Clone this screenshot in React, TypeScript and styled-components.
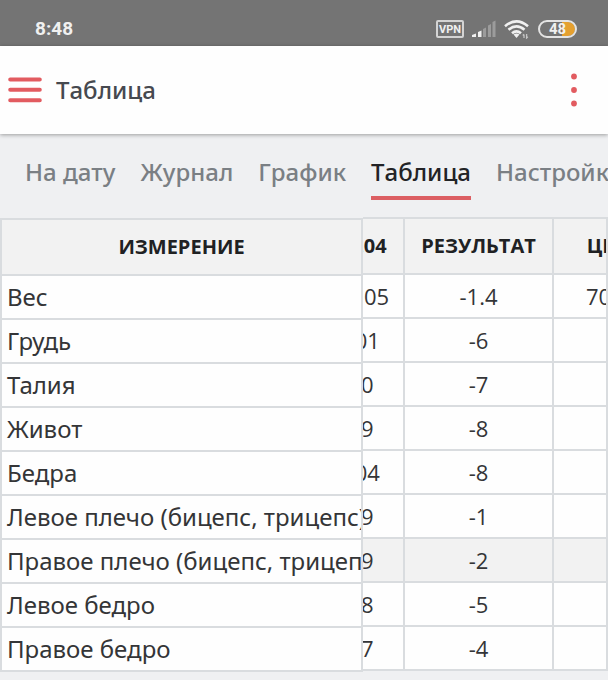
import React from 'react';
import styled, { createGlobalStyle, css } from 'styled-components';

const line = '#d9dcdf';
const red = '#e25b60';

const GlobalStyle = createGlobalStyle`
  *, *::before, *::after { box-sizing: border-box; }
  body {
    margin: 0;
    min-height: 100vh;
    overflow-x: hidden;
    background: #eff0f2;
    color: #343537;
    font-family: "Noto Sans", "Open Sans", sans-serif;
  }
  button { margin: 0; padding: 0; border: 0; background: none; font: inherit; cursor: pointer; }
`;

const StatusBar = styled.div`
  display: flex;
  align-items: center;
  justify-content: space-between;
  height: 46px;
  padding: 12px 31px 0 35px;
  background: #747474;
  color: #f0f0f0;
  font-family: Roboto, sans-serif;
`;

const Clock = styled.time`
  font-size: 19px;
  line-height: 24px;
  font-weight: 700;
`;

const StatusIcons = styled.div`
  display: flex;
  align-items: center;
  gap: 8px;
`;

const VpnBadge = styled.span`
  display: flex;
  align-items: center;
  justify-content: center;
  width: 28px;
  height: 18px;
  border: 2px solid #d4d4d4;
  border-radius: 2px;
  font-size: 11px;
  font-weight: 700;
`;

const Battery = styled.span`
  display: flex;
  align-items: center;
  justify-content: center;
  width: 39px;
  height: 18px;
  margin-left: 1px;
  border: 2px solid #e4e4e4;
  border-radius: 9px;
  background: linear-gradient(to right, #747474 0 62%, #e5a02f 62%);
  background-clip: padding-box;
  font-size: 15px;
  line-height: 14px;
  font-weight: 700;
`;

const AppBar = styled.header`
  display: flex;
  align-items: center;
  gap: 14px;
  height: 88px;
  padding: 0 22px 0 8px;
  background: #fefefe;
  box-shadow: 0 1px 4px rgba(0, 0, 0, 0.35);
`;

const Title = styled.h1`
  flex: 1;
  margin: 0;
  color: #46494f;
  font-size: 24px;
  line-height: 32px;
  font-weight: 500;
  font-kerning: none;
`;

const IconButton = styled.button`
  display: flex;
  align-items: center;
  justify-content: center;
  color: ${red};
`;

const Tabs = styled.nav`
  display: flex;
  gap: 25px;
  height: 83px;
  padding: 20px 0 0 25px;
  overflow: hidden;
`;

const Tab = styled.a<{ $active?: boolean }>`
  flex: none;
  height: 46px;
  border-bottom: 4px solid ${({ $active }) => ($active ? '#dc5f63' : 'transparent')};
  color: ${({ $active }) => ($active ? '#222326' : '#7a7f84')};
  font-size: 24px;
  line-height: 36px;
  font-weight: 500;
  font-kerning: none;
  text-decoration: none;
  white-space: nowrap;
`;

const Sheet = styled.main`
  display: flex;
  align-items: flex-start;
`;

const Pinned = styled.div`
  flex: 0 0 363px;
  min-width: 0;
  margin-top: 1px;
`;

const Scroller = styled.div`
  flex: 1;
  min-width: 0;
  overflow: hidden;
  border-right: 2px solid ${line};
`;

const tableBase = css`
  border-collapse: separate;
  border-spacing: 0;
  table-layout: fixed;
  border-top: 2px solid ${line};
`;

const NameTable = styled.table`
  ${tableBase}
  width: 100%;
  border-left: 2px solid ${line};
`;

const ValueTable = styled.table`
  ${tableBase}
  width: 357px;
  margin-left: -44px;
`;

const HeadCell = styled.th`
  height: 56px;
  padding: 0 6px;
  border-right: 2px solid ${line};
  border-bottom: 2px solid ${line};
  background: #f2f2f2;
  color: #202123;
  font-family: "Open Sans", "Noto Sans", sans-serif;
  font-size: 20px;
  line-height: 28px;
  font-weight: 700;
  font-kerning: none;
  text-align: center;
  text-transform: uppercase;
  white-space: nowrap;
`;

const cell = css`
  height: 44px;
  border-right: 2px solid ${line};
  border-bottom: 2px solid ${line};
  font-weight: 400;
  white-space: nowrap;
  overflow: hidden;
`;

const NameCell = styled.th`
  ${cell}
  padding: 0 0 0 5px;
  background: #fefefe;
  font-size: 24px;
  line-height: 32px;
  text-align: left;
`;

const ValueCell = styled.td<{ $shaded?: boolean }>`
  ${cell}
  padding: 0;
  background: ${({ $shaded }) => ($shaded ? '#f2f2f2' : '#fefefe')};
  font-family: "Open Sans", "Noto Sans", sans-serif;
  font-size: 22px;
  line-height: 32px;
  text-align: center;
`;

const tabs = ['На дату', 'Журнал', 'График', 'Таблица', 'Настройки'];

const rows = [
  { name: 'Вес', value: '71.05', result: '-1.4', goal: '70.00' },
  { name: 'Грудь', value: '101', result: '-6', goal: '' },
  { name: 'Талия', value: '80', result: '-7', goal: '' },
  { name: 'Живот', value: '89', result: '-8', goal: '' },
  { name: 'Бедра', value: '104', result: '-8', goal: '' },
  { name: 'Левое плечо (бицепс, трицепс)', value: '29', result: '-1', goal: '' },
  { name: 'Правое плечо (бицепс, трицепс)', value: '29', result: '-2', goal: '', shaded: true },
  { name: 'Левое бедро', value: '58', result: '-5', goal: '' },
  { name: 'Правое бедро', value: '57', result: '-4', goal: '' },
];

const SignalIcon = () => (
  <svg width="24" height="18" viewBox="0 0 24 18" aria-hidden="true">
    <path d="M0 15l4-1.500V17H0zM6 12l3.500-1.500V17H6z" fill="#f0f0f0" />
    <path d="M11 9l3-1.500V17h-3zM16 5.500l3-1.500v13h-3zM20.500 2l3-1.500V17h-3z" fill="#9c9c9c" />
  </svg>
);

const WifiIcon = () => (
  <svg width="25" height="20" viewBox="0 0 25 20" aria-hidden="true">
    <g fill="none" stroke="#f0f0f0" strokeWidth="2.6">
      <path d="M1 7.200Q12.500-2.600 24 7.200" />
      <path d="M4.500 10.800Q12.500 4 20.500 10.800" />
      <path d="M8 14.200Q12.500 10.400 17 14.200" />
    </g>
    <path d="M9.500 15.600Q12.500 13.400 15.500 15.600L12.500 19z" fill="#f0f0f0" />
    <path d="M20 19v-3.500M18.800 16.500l1.200-1.200M22.600 15v4l1.200-1.200" fill="none" stroke="#c4c4c4" strokeWidth="1.300" />
  </svg>
);

const MenuIcon = () => (
  <svg width="34" height="26" viewBox="0 0 34 26" aria-hidden="true">
    <path d="M2.200 2.500h29.600M2.200 12.800h29.600M2.200 23.200h29.600" stroke="currentColor" strokeWidth="4" strokeLinecap="round" />
  </svg>
);

const MoreIcon = () => (
  <svg width="24" height="36" viewBox="0 0 24 36" fill="currentColor" aria-hidden="true">
    <circle cx="12" cy="4.500" r="2.900" />
    <circle cx="12" cy="18" r="2.900" />
    <circle cx="12" cy="31.500" r="2.900" />
  </svg>
);

export default function App() {
  return (
    <>
      <GlobalStyle />
      <StatusBar>
        <Clock>8:48</Clock>
        <StatusIcons>
          <VpnBadge>VPN</VpnBadge>
          <SignalIcon />
          <WifiIcon />
          <Battery>48</Battery>
        </StatusIcons>
      </StatusBar>
      <AppBar>
        <IconButton type="button" aria-label="Меню"><MenuIcon /></IconButton>
        <Title>Таблица</Title>
        <IconButton type="button" aria-label="Ещё"><MoreIcon /></IconButton>
      </AppBar>
      <Tabs>
        {tabs.map((tab) => (
          <Tab key={tab} href="#" $active={tab === 'Таблица'} aria-current={tab === 'Таблица' ? 'page' : undefined}>
            {tab}
          </Tab>
        ))}
      </Tabs>
      <Sheet>
        <Pinned>
          <NameTable>
            <thead>
              <tr><HeadCell scope="col">Измерение</HeadCell></tr>
            </thead>
            <tbody>
              {rows.map((row) => (
                <tr key={row.name}><NameCell scope="row">{row.name}</NameCell></tr>
              ))}
            </tbody>
          </NameTable>
        </Pinned>
        <Scroller>
          <ValueTable>
            <colgroup>
              <col width="86" />
              <col width="149" />
              <col width="122" />
            </colgroup>
            <thead>
              <tr>
                <HeadCell scope="col">23.04</HeadCell>
                <HeadCell scope="col">Результат</HeadCell>
                <HeadCell scope="col">Цель</HeadCell>
              </tr>
            </thead>
            <tbody>
              {rows.map((row) => (
                <tr key={row.name}>
                  <ValueCell $shaded={row.shaded}>{row.value}</ValueCell>
                  <ValueCell $shaded={row.shaded}>{row.result}</ValueCell>
                  <ValueCell $shaded={row.shaded}>{row.goal}</ValueCell>
                </tr>
              ))}
            </tbody>
          </ValueTable>
        </Scroller>
      </Sheet>
    </>
  );
}
